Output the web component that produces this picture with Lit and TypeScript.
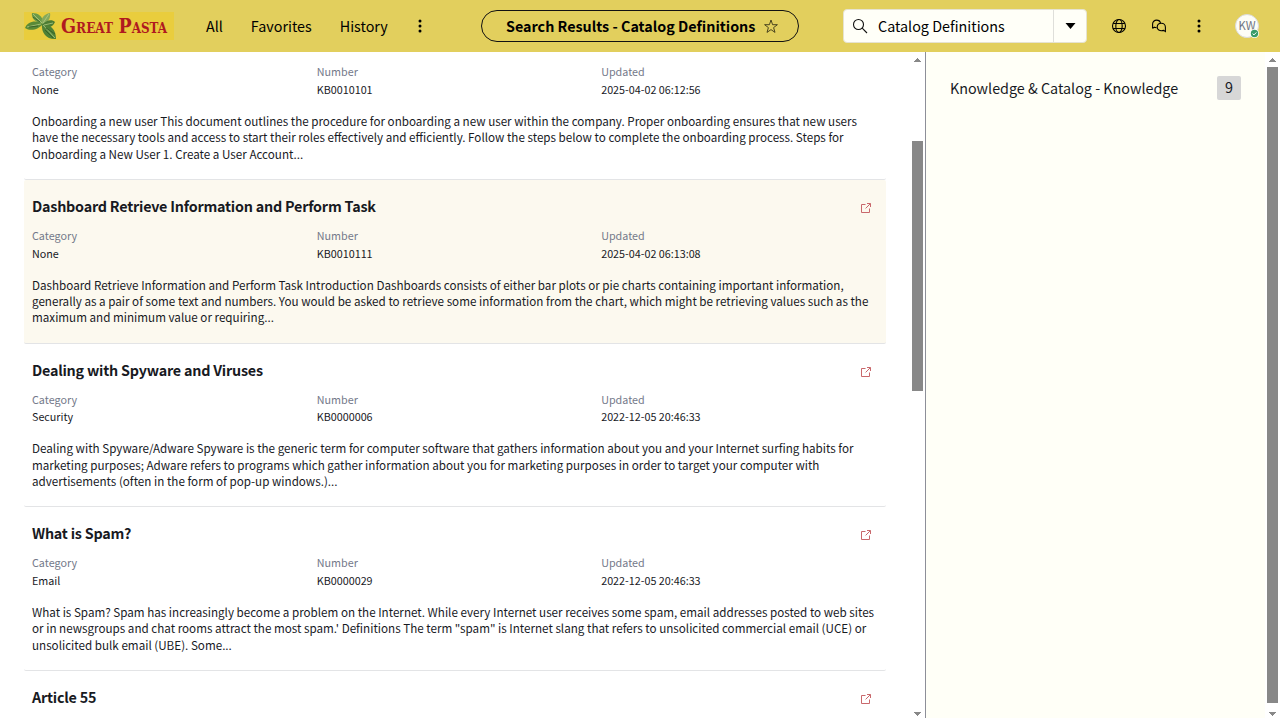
import { LitElement, html, css, svg, nothing } from "lit";
import { customElement, property } from "lit/decorators.js";

interface Article {
  title?: string;
  category?: string;
  number?: string;
  updated?: string;
  lines?: string[];
  active?: boolean;
}

const ARTICLES: Article[] = [
  {
    category: "None",
    number: "KB0010101",
    updated: "2025-04-02 06:12:56",
    lines: [
      "Onboarding a new user This document outlines the procedure for onboarding a new user within the company. Proper onboarding ensures that new users",
      "have the necessary tools and access to start their roles effectively and efficiently. Follow the steps below to complete the onboarding process. Steps for",
      "Onboarding a New User 1. Create a User Account...",
    ],
  },
  {
    title: "Dashboard Retrieve Information and Perform Task",
    category: "None",
    number: "KB0010111",
    updated: "2025-04-02 06:13:08",
    active: true,
    lines: [
      "Dashboard Retrieve Information and Perform Task Introduction Dashboards consists of either bar plots or pie charts containing important information,",
      "generally as a pair of some text and numbers. You would be asked to retrieve some information from the chart, which might be retrieving values such as the",
      "maximum and minimum value or requiring...",
    ],
  },
  {
    title: "Dealing with Spyware and Viruses",
    category: "Security",
    number: "KB0000006",
    updated: "2022-12-05 20:46:33",
    lines: [
      "Dealing with Spyware/Adware Spyware is the generic term for computer software that gathers information about you and your Internet surfing habits for",
      "marketing purposes; Adware refers to programs which gather information about you for marketing purposes in order to target your computer with",
      "advertisements (often in the form of pop-up windows.)...",
    ],
  },
  {
    title: "What is Spam?",
    category: "Email",
    number: "KB0000029",
    updated: "2022-12-05 20:46:33",
    lines: [
      "What is Spam? Spam has increasingly become a problem on the Internet. While every Internet user receives some spam, email addresses posted to web sites",
      "or in newsgroups and chat rooms attract the most spam.' Definitions The term \"spam\" is Internet slang that refers to unsolicited commercial email (UCE) or",
      "unsolicited bulk email (UBE). Some...",
    ],
  },
  { title: "Article 55" },
];

const dots = svg`<circle cx="8" cy="3.1" r="1.5"/><circle cx="8" cy="8" r="1.5"/><circle cx="8" cy="12.9" r="1.5"/>`;

@customElement("result-item")
class ResultItem extends LitElement {
  @property({ attribute: false }) article!: Article;

  static styles = css`
    :host { display: block; }
    .card {
      box-sizing: border-box;
      height: 163.64px;
      padding: 14.2px 8px 0;
      border-bottom: 1px solid #e3e4e6;
      border-radius: 2px;
    }
    .active { background: #fcf9ef; }
    .clipped { height: 128px; padding-top: 11.2px; }
    .head { display: flex; justify-content: space-between; height: 32.7px; }
    .title { margin: 0; font-size: 14.33px; line-height: 23px; font-weight: 600; letter-spacing: -0.215px; white-space: nowrap; }
    .open { width: 12px; height: 12px; margin: 7.9px 6px 0 0; }
    .fields { display: grid; grid-template-columns: 284.8px 284.4px 1fr; }
    .label, .value { font-size: 10.75px; line-height: 18px; }
    .value { line-height: 17.6px; margin: -0.25px 0 0.25px; }
    .label { color: #74798a; }
    .desc { margin-top: 14.2px; font-size: 11.65px; line-height: 16.36px; white-space: nowrap; }
  `;

  render() {
    const a = this.article;
    return html`<article class="card ${a.active ? "active" : ""} ${a.title ? "" : "clipped"}">
      ${a.title
        ? html`<div class="head">
            <h3 class="title">${a.title}</h3>
            <svg class="open" viewBox="0 0 12 12" fill="none" stroke="#c9686c">
              <path d="M5.5 2.5H1.5V10.5H9.5V6.5M7 1.5H10.5V5M10.3 1.7L5.6 6.4" />
            </svg>
          </div>`
        : nothing}
      ${a.category
        ? html`<div class="fields">
              <div><div class="label">Category</div><div class="value">${a.category}</div></div>
              <div><div class="label">Number</div><div class="value">${a.number}</div></div>
              <div><div class="label">Updated</div><div class="value">${a.updated}</div></div>
            </div>
            <div class="desc">${a.lines!.map((l) => html`<div>${l}</div>`)}</div>`
        : nothing}
    </article>`;
  }
}

@customElement("scroll-rail")
class ScrollRail extends LitElement {
  @property({ type: Number }) before = 0;
  @property({ type: Number }) size = 0;

  static styles = css`
    :host { display: flex; flex-direction: column; align-items: center; width: 15px; background: #fff; flex: none; }
    .arrow { width: 7px; height: 4px; flex: none; margin-top: 6px; }
    .track { flex: 1; margin-top: 5px; }
    .thumb { width: 11px; background: #888; }
    .down { margin: 0 0 2px; }
  `;

  render() {
    return html`
      <svg class="arrow" viewBox="0 0 7 4" fill="#888"><path d="M3 0H4V1H5V2H6V3H7V4H0V3H1V2H2V1H3Z" /></svg>
      <div class="track"><div class="thumb" style="height:${this.size}px;margin-top:${this.before}px"></div></div>
      <svg class="arrow down" viewBox="0 0 7 4" fill="#888"><path d="M0 0H7V1H6V2H5V3H4V4H3V3H2V2H1V1H0Z" /></svg>
    `;
  }
}

@customElement("app-root")
class AppRoot extends LitElement {
  static styles = css`
    :host {
      display: flex;
      flex-direction: column;
      width: 1280px;
      height: 718px;
      overflow: hidden;
      color: #181a1f;
      font-family: "Noto Sans CJK SC", "Noto Sans", sans-serif;
      font-size: 14.33px;
    }
    .bar { display: flex; align-items: center; height: 52px; flex: none; background: #e2cf5d; color: #000; line-height: 24px; white-space: nowrap; }
    .logo { width: 150px; height: 28px; margin-left: 24px; }
    .word { font-family: "DejaVu Serif", serif; font-stretch: condensed; font-weight: 700; font-size: 20.5px; font-variant: small-caps; fill: #b01a20; }
    .nav { display: flex; width: 307px; padding-left: 32px; box-sizing: border-box; align-items: center; }
    .nav .fav { margin-left: 28px; }
    .nav .hist { margin-left: 28px; }
    .icon { width: 16px; height: 16px; flex: none; }
    .nav .icon { margin-left: 24px; }
    .pill { box-sizing: border-box; width: 318px; height: 32px; border: 1px solid #111; border-radius: 16px; display: flex; align-items: center; padding-left: 24px; font-weight: 700; }
    .pill .icon { margin-left: 8px; }
    .search { box-sizing: border-box; display: flex; align-items: center; width: 244px; height: 34px; margin-left: 44px; background: #fffff8; border: 1px solid #e6e3d0; border-radius: 4px; }
    .search .icon { margin: 0 10px 0 8px; }
    .query { width: 175px; }
    .drop { display: flex; align-items: center; justify-content: center; flex: 1; height: 100%; border-left: 1px solid #dfdfda; }
    .caret { width: 11px; height: 6px; }
    .tools { display: flex; align-items: center; gap: 24px; margin-left: 24px; }
    .avatar { position: relative; display: flex; align-items: center; justify-content: center; box-sizing: border-box; width: 24px; height: 24px; border: 1px solid #dadada; border-radius: 50%; background: #fdfdf7; color: #6d7482; font-size: 11.2px; line-height: 20px; padding-bottom: 2px; margin-left: 4px; }
    .presence { position: absolute; right: -1px; bottom: -1px; width: 9px; height: 9px; }
    .main { display: flex; flex: 1; min-height: 0; }
    .results { width: 862px; padding: 0 24px; overflow: hidden; background: #fff; }
    .side { flex: 1; display: flex; box-sizing: border-box; border-left: 1px solid #8d8f98; background: #fffff7; }
    .facet { display: flex; justify-content: space-between; flex: 1; height: 24px; margin: 24px 24px 0; line-height: 24px; }
    .count { width: 24px; height: 24px; border-radius: 2px; background: #d7d7d7; text-align: center; line-height: 22px; }
  `;

  render() {
    return html`
      <header class="bar">
        <svg class="logo" viewBox="0 0 150 28">
          <rect width="150" height="28" fill="#e9cd3d" />
          <path d="M18 12C11 10 7 6 8 1C14 1 19 4 19 11Z" fill="#6b9a48" />
          <path d="M18 12C16 7 20 2 26 1C27 6 24 10 19 13Z" fill="#86a95b" />
          <path d="M18 12C12 7 3 10 1 16C7 20 15 17 19 12Z" fill="#5a8a37" />
          <path d="M18 13C22 8 28 7 31 10C29 15 24 17 18 14Z" fill="#4c7b33" />
          <path d="M18 12C27 12 32 18 32 27C23 28 17 21 18 12Z" fill="#4f8136" />
          <path d="M9 2L18 11M3 15L17 12M19 13L31 26M25 2L19 11M20 13L29 11" stroke="#b3cc83" stroke-width=".8" fill="none" />
          <path d="M9 5L16 10M5 15L14 14M21 18L29 26M22 16L31 22" stroke="#315b24" stroke-width=".8" fill="none" />
          <text class="word" x="37" y="21" textLength="52" lengthAdjust="spacingAndGlyphs">Great</text>
          <text class="word" x="94.5" y="21" textLength="48.5" lengthAdjust="spacingAndGlyphs">Pasta</text>
        </svg>
        <nav class="nav">
          <span>All</span><span class="fav">Favorites</span><span class="hist">History</span>
          <svg class="icon" viewBox="0 0 16 16">${dots}</svg>
        </nav>
        <div class="pill">
          <span>Search Results - Catalog Definitions</span>
          <svg class="icon" viewBox="0 0 16 16" fill="none" stroke="#3a3617" stroke-width=".9">
            <path d="M8 2L9.6 6.7H14.4L10.6 9.6L12 14.4L8 11.6L4 14.4L5.4 9.6L1.6 6.7H6.4Z" />
          </svg>
        </div>
        <div class="search">
          <svg class="icon" viewBox="0 0 16 16" fill="none" stroke="#111" stroke-width="1.1">
            <circle cx="6.5" cy="6.5" r="5" /><path d="M10.2 10.2L15 15" />
          </svg>
          <span class="query">Catalog Definitions</span>
          <div class="drop"><svg class="caret" viewBox="0 0 11 6"><path d="M.5 0H10.5L5.5 6Z" /></svg></div>
        </div>
        <div class="tools">
          <svg class="icon" viewBox="0 0 16 16" fill="none" stroke="#000" stroke-width="1.1">
            <circle cx="8" cy="8" r="6.5" /><ellipse cx="8" cy="8" rx="3.2" ry="6.5" /><path d="M2.2 5.5H13.8M2.2 10.5H13.8" />
          </svg>
          <svg class="icon" viewBox="0 0 16 16" fill="none" stroke="#000" stroke-width="1.1">
            <path d="M1.6 10.4V6A4 3.9 0 0 1 5.6 2.1C7.7 2.1 9.2 3.3 9.5 5.1M1.6 10.4L3.4 9.2C4 9.5 4.8 9.7 5.6 9.6" />
            <path d="M14.4 13.5L12.6 12.4C8.5 13.6 6 11.5 6.2 8.9C6.4 6.7 8.2 5.3 10.3 5.3C12.8 5.3 14.4 7 14.4 9.2Z" />
          </svg>
          <svg class="icon" viewBox="0 0 16 16">${dots}</svg>
          <div class="avatar">KW
            <svg class="presence" viewBox="0 0 9 9"><circle cx="4.5" cy="4.5" r="4.5" fill="#fff" /><circle cx="4.5" cy="4.5" r="3.7" fill="#389b68" /><path d="M2.6 4.6L4 5.9L6.4 3.4" fill="none" stroke="#fff" /></svg>
          </div>
        </div>
      </header>
      <main class="main">
        <section class="results">
          ${ARTICLES.map((a) => html`<result-item .article=${a}></result-item>`)}
        </section>
        <scroll-rail before="74" size="250"></scroll-rail>
        <aside class="side">
          <div class="facet"><span>Knowledge &amp; Catalog - Knowledge</span><span class="count">9</span></div>
          <scroll-rail before="0" size="636"></scroll-rail>
        </aside>
      </main>
    `;
  }
}
